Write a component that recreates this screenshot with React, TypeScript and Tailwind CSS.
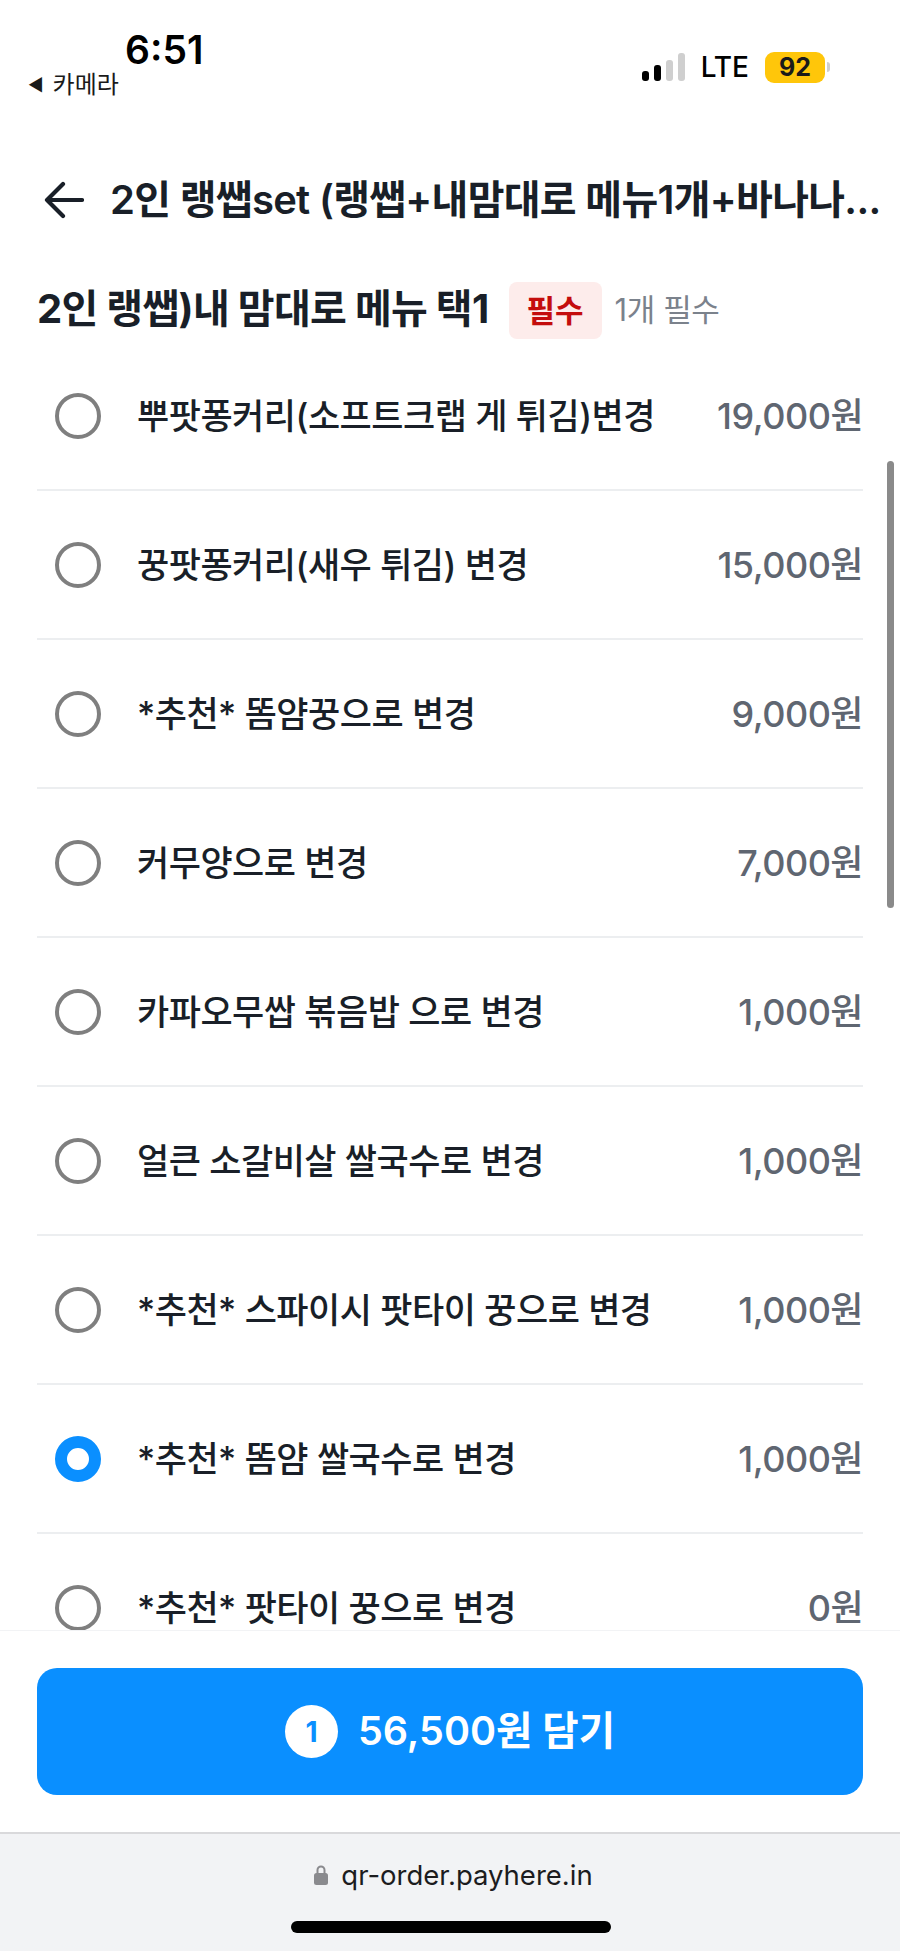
const font = { fontFamily: '"Inter", "Noto Sans CJK KR", sans-serif' };

const options = [
  { name: '뿌팟퐁커리(소프트크랩 게 튀김)변경', price: '19,000원' },
  { name: '꿍팟퐁커리(새우 튀김) 변경', price: '15,000원' },
  { name: '*추천* 똠얌꿍으로 변경', price: '9,000원' },
  { name: '커무양으로 변경', price: '7,000원' },
  { name: '카파오무쌉 볶음밥 으로 변경', price: '1,000원' },
  { name: '얼큰 소갈비살 쌀국수로 변경', price: '1,000원' },
  { name: '*추천* 스파이시 팟타이 꿍으로 변경', price: '1,000원' },
  { name: '*추천* 똠얌 쌀국수로 변경', price: '1,000원', selected: true },
  { name: '*추천* 팟타이 꿍으로 변경', price: '0원' },
];

function StatusBar() {
  return (
    <div className="flex h-[110px] shrink-0 justify-between pl-[28px] pr-[70px] pt-[28px]">
      <div className="flex flex-col">
        <div className="ml-[97px] text-[39px] font-semibold leading-[44px] text-black">6:51</div>
        <div className="flex items-center gap-[9px] text-[24px] leading-[26px] text-[#1a1a1a]">
          <span className="text-[17px] leading-none">◀</span>
          <span>카메라</span>
        </div>
      </div>
      <div className="flex h-[54px] translate-y-[12px] items-center">
        <div className="mr-[16px] flex items-end gap-[5px]">
          <div className="h-[10px] w-[7px] rounded-[3px] bg-black" />
          <div className="h-[16px] w-[7px] rounded-[3px] bg-black" />
          <div className="h-[21px] w-[7px] rounded-[3px] bg-[#cfcfcf]" />
          <div className="h-[28px] w-[7px] rounded-[3px] bg-[#cfcfcf]" />
        </div>
        <div className="mr-[16px] text-[28px] font-medium leading-none text-black">LTE</div>
        <div className="flex h-[31px] w-[60px] items-center justify-center rounded-[9px] bg-[#ffc60a] text-[25px] font-bold leading-none text-[#1a1a1a]">
          92
        </div>
        <div className="ml-[2px] h-[10px] w-[3px] rounded-r-[3px] bg-[#cfcfcf]" />
      </div>
    </div>
  );
}

function Radio({ selected }: { selected?: boolean }) {
  return selected ? (
    <div className="h-[46px] w-[46px] shrink-0 rounded-full border-[12px] border-[#0a8fff] bg-white" />
  ) : (
    <div className="h-[46px] w-[46px] shrink-0 rounded-full border-[4px] border-[#7f7f7f] bg-white" />
  );
}

function OptionRow({ name, price, selected }: { name: string; price: string; selected?: boolean }) {
  return (
    <div className="flex h-[149px] shrink-0 items-center border-b-2 border-[#eceef0] pl-[18px]">
      <Radio selected={selected} />
      <div className="ml-[36px] flex-1 text-[35px] font-medium leading-[40px] tracking-[-0.5px] text-[#191f28]">{name}</div>
      <div className="text-[36px] font-medium leading-[40px] tracking-[-0.5px] text-[#5f6671]">{price}</div>
    </div>
  );
}

export default function App() {
  return (
    <div className="flex h-[1951px] w-[900px] flex-col overflow-hidden bg-white" style={font}>
      <StatusBar />
      <div className="mt-[47px] flex h-[86px] shrink-0 items-center pl-[44px]">
        <svg width="40" height="38" viewBox="0 0 40 38" fill="none" stroke="#191f28" strokeWidth="4.2" strokeLinecap="round" strokeLinejoin="round">
          <path d="M38 19H3M19 3 3 19l16 16" />
        </svg>
        <div className="ml-[26px] whitespace-nowrap text-[40px] font-semibold leading-[48px] tracking-[-0.7px] text-[#191f28]">
          2인 랭쌥set (랭쌥+내맘대로 메뉴1개+바나나...
        </div>
      </div>
      <div className="mt-[31px] flex h-[70px] shrink-0 items-center pl-[37px]">
        <div className="text-[40px] font-bold leading-[44px] tracking-[-0.7px] text-[#191f28]">2인 랭쌥)내 맘대로 메뉴 택1</div>
        <div className="ml-[20px] mt-[3px] flex h-[57px] w-[93px] items-center justify-center rounded-[8px] bg-[#fdeceb] text-[31px] font-bold leading-none text-[#c40d0d]">
          필수
        </div>
        <div className="ml-[13px] text-[31px] leading-none tracking-[-0.4px] text-[#7b828c]">1개 필수</div>
      </div>
      <div className="relative flex-1 overflow-hidden">
        <div className="mx-[37px] mt-[-2px] flex flex-col">
          {options.map((o) => (
            <OptionRow key={o.name} name={o.name} price={o.price} selected={o.selected} />
          ))}
        </div>
        <div className="absolute right-[6px] top-[117px] h-[447px] w-[7px] rounded-full bg-[#8a8a8a]" />
      </div>
      <div className="flex h-[202px] shrink-0 flex-col border-t border-[#f2f3f5] bg-white px-[37px] pt-[37px]">
        <div className="flex h-[127px] items-center justify-center rounded-[20px] bg-[#0a8fff]">
          <div className="flex h-[53px] w-[53px] items-center justify-center rounded-full bg-white text-[28px] font-bold leading-none text-[#0a8fff]">1</div>
          <div className="ml-[20px] text-[39.5px] font-semibold leading-none text-white">56,500원 담기</div>
        </div>
      </div>
      <div className="relative flex h-[119px] shrink-0 flex-col items-center border-t-2 border-[#d9d9db] bg-[#f2f3f5]">
        <div className="mt-[25px] flex items-center gap-[12px] pl-[6px]">
          <svg width="16" height="22" viewBox="0 0 16 22" fill="#8a8a8e">
            <path d="M3.5 9V6a4.5 4.5 0 0 1 9 0v3h-2V6a2.5 2.5 0 0 0-5 0v3z" />
            <rect x="1" y="9" width="14" height="12" rx="2.5" />
          </svg>
          <div className="text-[27.5px] leading-[32px] text-[#1c1c1e]">qr-order.payhere.in</div>
        </div>
        <div className="absolute bottom-[18px] left-[291px] h-[12px] w-[320px] rounded-full bg-black" />
      </div>
    </div>
  );
}
